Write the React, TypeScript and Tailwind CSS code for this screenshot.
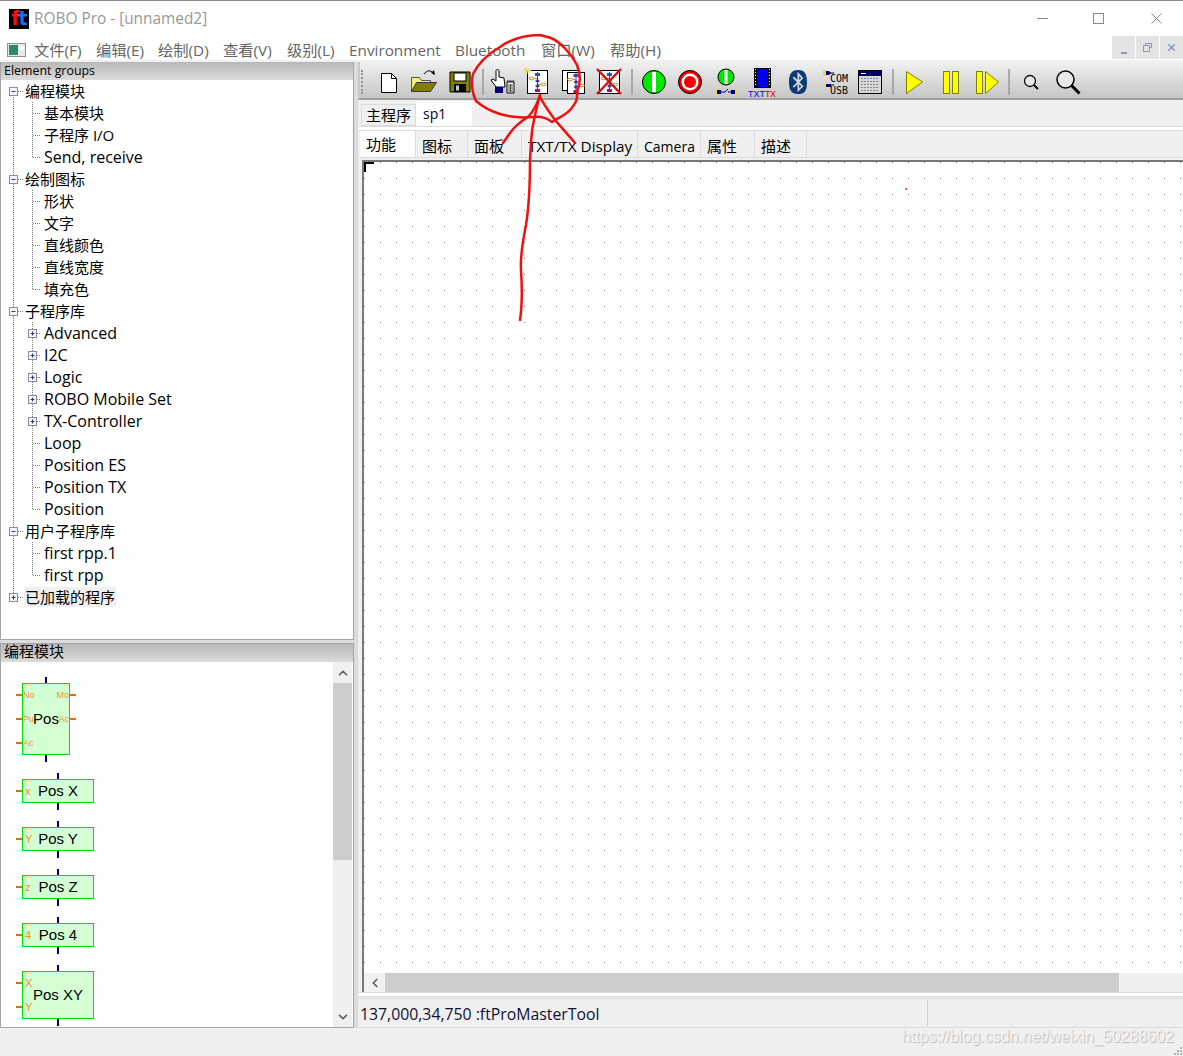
import { ChevronDown, ChevronLeft, ChevronUp, X } from "lucide-react";
import { FaBluetooth } from "react-icons/fa";

const UI_FONT = "font-['Open_Sans','Noto_Sans_CJK_SC',sans-serif]";
const BLOCK_FONT = "font-['Liberation_Sans','Noto_Sans_CJK_SC',sans-serif]";

type TreeRow = { text: string; level: 0 | 1; box?: "plus" | "minus"; lastChild?: boolean; lastRoot?: boolean; selected?: boolean };

const tree: TreeRow[] = [
    { text: "编程模块", level: 0, box: "minus" },
    { text: "基本模块", level: 1 },
    { text: "子程序 I/O", level: 1 },
    { text: "Send, receive", level: 1, lastChild: true },
    { text: "绘制图标", level: 0, box: "minus" },
    { text: "形状", level: 1 },
    { text: "文字", level: 1 },
    { text: "直线颜色", level: 1 },
    { text: "直线宽度", level: 1 },
    { text: "填充色", level: 1, lastChild: true },
    { text: "子程序库", level: 0, box: "minus" },
    { text: "Advanced", level: 1, box: "plus" },
    { text: "I2C", level: 1, box: "plus" },
    { text: "Logic", level: 1, box: "plus" },
    { text: "ROBO Mobile Set", level: 1, box: "plus" },
    { text: "TX-Controller", level: 1, box: "plus" },
    { text: "Loop", level: 1 },
    { text: "Position ES", level: 1 },
    { text: "Position TX", level: 1 },
    { text: "Position", level: 1, lastChild: true },
    { text: "用户子程序库", level: 0, box: "minus" },
    { text: "first rpp.1", level: 1 },
    { text: "first rpp", level: 1, lastChild: true },
    { text: "已加载的程序", level: 0, box: "plus", lastRoot: true, selected: true },
];

function TreeBox({ x, kind }: { x: number; kind: "plus" | "minus" }) {
    return (
        <g>
            <rect x={x - 4} y={7.5} width={8} height={8} fill="#f4f4f8" stroke="#8c8c9c" />
            <path d={`M${x - 2} 11.5h4`} stroke="#2a3a80" />
            {kind === "plus" && <path d={`M${x} 9.5v4`} stroke="#2a3a80" />}
        </g>
    );
}

function TreeItem({ row, index }: { row: TreeRow; index: number }) {
    const dots = { stroke: "#808080", strokeDasharray: "1 1", fill: "none" };
    const first = index === 0;
    const latin = /^[\x00-\x7f]+$/.test(row.text);
    return (
        <div className="flex h-[22px] items-center">
            <svg width={row.level === 0 ? 23 : 42} height={22} className="shrink-0">
                <path d={`M12.5 ${first ? 11 : 0}V${row.lastRoot ? 11 : 22}`} {...dots} />
                {row.level === 0 && <path d="M17 11.5h5" {...dots} />}
                {row.level === 1 && <path d={`M31.5 0V${row.lastChild ? 11 : 22}`} {...dots} />}
                {row.level === 1 && <path d="M32 11.5h8" {...dots} />}
                {row.box && <TreeBox x={row.level === 0 ? 12.5 : 31.5} kind={row.box} />}
            </svg>
            <span className={`px-[1px] leading-[20px] whitespace-nowrap text-black ${latin ? "text-[16px]" : "text-[15px]"} ${row.selected ? "bg-[#f0f0f0]" : ""}`}>{row.text}</span>
        </div>
    );
}

type Pin = { top: number; side: "left" | "right"; label: string };

function Block({ title, width, height, stubX, pins, size = 11 }: { title: string; width: number; height: number; stubX: number; pins: Pin[]; size?: number }) {
    return (
        <div className={`flex flex-col ${BLOCK_FONT}`} style={{ width }}>
            <div className="h-[6px] w-[2px] bg-[#000080]" style={{ marginLeft: stubX }} />
            <div className="relative flex items-center justify-center border border-[#00e000] bg-[#d4ffd4] text-[15px] text-black" style={{ height }}>
                {title}
                {pins.map((p) => (
                    <div key={p.side + p.top}>
                        <div className={`absolute h-[2px] w-[6px] bg-[#e07000] ${p.side === "left" ? "left-[-7px]" : "right-[-7px]"}`} style={{ top: p.top - 1 }} />
                        <span
                            className={`absolute leading-none text-[#ee9030] ${p.side === "left" ? (size > 9 ? "left-[2px]" : "left-0") : "right-0"}`}
                            style={{ top: p.top - Math.round(size / 2) + 1, fontSize: size }}
                        >
                            {p.label}
                        </span>
                    </div>
                ))}
            </div>
            <div className="h-[7px] w-[2px] bg-[#000080]" style={{ marginLeft: stubX }} />
        </div>
    );
}

function FlowGlyph({ x = 0, y = 0 }: { x?: number; y?: number }) {
    return (
        <g transform={`translate(${x} ${y})`}>
            <path d="M16 6v19" stroke="#3040a0" />
            <rect x={13.5} y={7} width={5} height={3} fill="#2850c8" />
            <path d="M13.5 15l2.5-2 2.5 2-2.5 2z" fill="#3040a0" />
            <path d="M13.5 20l2.5-2 2.5 2-2.5 2z" fill="#3040a0" />
            <rect x={13.5} y={23} width={5} height={3} fill="#c00070" />
            <ellipse cx={10} cy={12.5} rx={2.5} ry={1.3} fill="#fff" stroke="#e08020" />
            <path d="M12.5 12.5h3" stroke="#e08020" />
            <ellipse cx={22} cy={18.5} rx={2.5} ry={1.3} fill="#fff" stroke="#e08020" />
            <path d="M16.5 18.5h3" stroke="#e08020" />
        </g>
    );
}

function Tool({ className, children }: { className: string; children: React.ReactNode }) {
    return (
        <svg width={32} height={32} viewBox="0 0 32 32" className={`shrink-0 ${className}`}>
            {children}
        </svg>
    );
}

function Separator({ className }: { className: string }) {
    return <div className={`h-[26px] w-[2px] shrink-0 bg-[#a8a8a8] ${className}`} />;
}

function Toolbar() {
    return (
        <div className="flex h-[38px] shrink-0 items-center border-b-2 border-l-2 border-b-[#a0a0a0] border-l-[#c8c8c8] bg-gradient-to-b from-[#f0f0f0] to-[#c6c6c6] pt-[4px]">
            <div className="ml-[1px] h-[24px] w-[3px] shrink-0 border-l-2 border-dotted border-[#909090]" />
            {/* new, open, save */}
            <Tool className="ml-[9px]">
                <path d="M8.5 7.5h10l5 5v14h-15z" fill="#fff" stroke="#000" />
                <path d="M18.5 7.5v5h5" fill="none" stroke="#000" />
            </Tool>
            <Tool className="ml-[3px]">
                <path d="M3.5 11.5h8l2 3h9v11h-19z" fill="#f4f070" stroke="#555" />
                <path d="M3.5 25.5l5-9h20l-6 9z" fill="#808000" stroke="#333" />
                <path d="M16 8c3-4 7-4 9-1" fill="none" stroke="#000" />
                <path d="M27 9l-4-2 3-3z" fill="#000" />
            </Tool>
            <Tool className="ml-[4px]">
                <path d="M6 6h20v20H6z" fill="#808000" stroke="#000" />
                <rect x={10} y={7} width={12} height={8} fill="#fff" stroke="#000" />
                <rect x={10} y={18} width={12} height={8} fill="#000" />
                <rect x={12} y={19.5} width={3} height={5} fill="#c8c8c8" />
            </Tool>
            <Separator className="ml-[6px]" />
            <Tool className="ml-[3px]">
                <path d="M9 21L4 14l2-1 3 2V5c0-2 3-2 3 0v6l5 1 1 9z" fill="#fff" stroke="#000" />
                <rect x={8} y={21} width={8} height={6} fill="#000080" />
                <path d="M20 16h7v11h-7z" fill="#fff" stroke="#000" />
                <path d="M22 18v8M23.5 18v8M25 18v8M19.5 15h8" stroke="#000" strokeWidth={0.7} />
            </Tool>
            {/* sub program: new, copy, delete */}
            <Tool className="ml-[3px]">
                <rect x={5.5} y={4.5} width={20} height={23} fill="#fff" stroke="#000" />
                <FlowGlyph x={-0.5} y={0} />
                <path d="M5 1v7M1 4.5h8M2 2l6 5M8 2L2 7" stroke="#e8e040" />
            </Tool>
            <Tool className="ml-[2px]">
                <rect x={6.5} y={4.5} width={17} height={20} fill="#fff" stroke="#000" />
                <rect x={11.5} y={6.5} width={17} height={21} fill="#fff" stroke="#000" />
                <FlowGlyph x={4} y={1} />
            </Tool>
            <Tool className="ml-[5px]">
                <rect x={6.5} y={4.5} width={20} height={23} fill="#fff" stroke="#000" />
                <FlowGlyph x={0.5} y={0} />
                <path d="M4 3l24 25M28 3L4 28" stroke="#d81010" strokeWidth={2.5} />
            </Tool>
            <Separator className="ml-[6px]" />
            {/* run controls */}
            <Tool className="ml-[5px]">
                <circle cx={16} cy={16} r={11.5} fill="#00e800" stroke="#000" />
                <rect x={14} y={6} width={4} height={20} fill="#fff" />
            </Tool>
            <Tool className="ml-[4px]">
                <circle cx={16} cy={16} r={11.5} fill="#f00000" stroke="#000" />
                <circle cx={16} cy={16} r={8.5} fill="#fff" />
                <circle cx={16} cy={16} r={6} fill="#f00000" />
            </Tool>
            <Tool className="ml-[4px]">
                <circle cx={16} cy={11} r={8} fill="#00e800" stroke="#000" />
                <rect x={14.5} y={4} width={3} height={14} fill="#fff" />
                <rect x={5} y={23} width={2} height={6} fill="#e8e040" />
                <rect x={7} y={24} width={4} height={4} fill="#000080" />
                <path d="M11 26h4l3-3M18 26h4" stroke="#000080" fill="none" />
                <rect x={21} y={24} width={4} height={4} fill="#000080" />
                <rect x={25} y={23} width={2} height={6} fill="#e8e040" />
            </Tool>
            <Tool className="ml-[4px]">
                <rect x={8} y={2} width={17} height={20} fill="#000" />
                <path d="M9.5 3v18M23.5 3v18" stroke="#fff" strokeDasharray="1 2" />
                <rect x={11} y={3} width={11} height={18} fill="#0000f0" />
                <text x={2} y={30.5} fontFamily="Liberation Sans" fontSize={9} fill="#0000f0" textLength={17}>TXT</text>
                <text x={19} y={30.5} fontFamily="Liberation Sans" fontSize={9} fill="#e00000" textLength={11}>TX</text>
            </Tool>
            <div className="ml-[4px] flex w-[32px] shrink-0 justify-center">
                <FaBluetooth size={24} color="#0a3a78" />
            </div>
            <Tool className="ml-[4px]">
                <rect x={5} y={4} width={3} height={6} fill="#e8e040" />
                <path d="M8 5h3l2 2-2 2H8z" fill="#000080" />
                <path d="M12 7h4" stroke="#000" />
                <rect x={5} y={18} width={3} height={4} fill="#e8e040" />
                <path d="M8 18h5v3H8z" fill="#000080" />
                <path d="M13 19h3" stroke="#000" />
                <text x={12} y={16} fontFamily="DejaVu Sans Mono" fontSize={10} fill="#000" textLength={18}>COM</text>
                <text x={12} y={28} fontFamily="DejaVu Sans Mono" fontSize={10} fill="#000" textLength={18}>USB</text>
            </Tool>
            <Tool className="ml-[4px]">
                <rect x={4.5} y={4.5} width={23} height={23} fill="#d8d8d8" stroke="#000" />
                <rect x={5} y={5} width={22} height={5} fill="#000060" />
                <path d="M7 7.5h5" stroke="#fff" />
                <path d="M7 12.5h18M7 15.5h18M7 18.5h18M7 21.5h18M7 24.5h18" stroke="#888" strokeDasharray="2 1" />
            </Tool>
            <Separator className="ml-[6px]" />
            {/* transfer */}
            <Tool className="ml-[4px]">
                <path d="M8.5 5.5L24.5 16 8.5 27.5z" fill="#ffff00" stroke="#808000" />
            </Tool>
            <Tool className="ml-[5px]">
                <rect x={8.5} y={5.5} width={6} height={22} fill="#ffff00" stroke="#808000" />
                <rect x={17.5} y={5.5} width={6} height={22} fill="#ffff00" stroke="#808000" />
            </Tool>
            <Tool className="ml-[4px]">
                <rect x={5.5} y={5.5} width={6} height={22} fill="#ffff00" stroke="#808000" />
                <path d="M14.5 5.5L27.5 16 14.5 27.5z" fill="#ffff00" stroke="#808000" />
            </Tool>
            <Separator className="ml-[5px]" />
            {/* zoom */}
            <Tool className="ml-[5px]">
                <circle cx={15} cy={15} r={5.5} fill="#e8e8e8" stroke="#000" strokeWidth={1.3} />
                <path d="M19 19l4 4" stroke="#000" strokeWidth={2} />
            </Tool>
            <Tool className="ml-[5px]">
                <circle cx={13.5} cy={13.5} r={8.5} fill="#e8e8e8" stroke="#000" strokeWidth={1.5} />
                <path d="M19.5 19.5l8 8" stroke="#000" strokeWidth={3} />
            </Tool>
        </div>
    );
}

const canvasTabs = [
    { label: "功能", width: "w-[56px]", text: "text-[15px]" },
    { label: "图标", width: "w-[52px]", text: "text-[15px] pt-[4px]" },
    { label: "面板", width: "w-[54px]", text: "text-[15px] pt-[4px]" },
    { label: "TXT/TX Display", width: "w-[116px]", text: "text-[15.3px] pt-[4px]" },
    { label: "Camera", width: "w-[63px]", text: "text-[14px] pt-[4px]" },
    { label: "属性", width: "w-[54px]", text: "text-[15px] pt-[4px]" },
    { label: "描述", width: "w-[52px]", text: "text-[15px] pt-[4px]" },
];

function RedMarks() {
    return (
        <svg className="pointer-events-none absolute top-0 left-0" width={1183} height={1056} fill="none" stroke="#f01010" strokeWidth={2.5} strokeLinecap="round" strokeLinejoin="round">
            <path d="M540 35C525 35 510 40 500 47 488 54 478 64 473 74 471 82 472 92 476 101 483 107 490 111 500 114 510 117 522 118 533 117 540 116 546 117 552 122 558 118 566 115 571 109 575 104 578 100 577 92 580 85 581 75 577 65 571 53 560 42 551 38Z" />
            <path d="M540 95C537 105 534 110 529 116 520 122 514 127 510 133L503 143" />
            <path d="M540 97C544 105 550 113 555 120 562 128 570 137 575 143" />
            <path d="M540 95C537 105 535 115 533 125 531 135 531 145 530 160 530 180 530 200 526 225 523 240 520 255 521 270 522 285 523 300 520 320" />
            <circle cx={906} cy={189} r={0.5} strokeWidth={1} />
        </svg>
    );
}

export default function App() {
    return (
        <div className={`relative h-[1056px] w-[1183px] overflow-hidden bg-[#f0f0f0] ${UI_FONT}`}>
            {/* title bar */}
            <div className="flex h-[36px] items-center border-t border-[#8c8c8c] bg-white pl-[9px]">
                <div className="flex h-[20px] w-[20px] items-center justify-center bg-black font-['DejaVu_Sans',sans-serif] text-[19px] leading-none font-bold tracking-[-1px]">
                    <span className="text-[#f01010]">f</span>
                    <span className="text-[#1070f0]">t</span>
                </div>
                <span className="ml-[5px] text-[15.4px] text-[#999999]">ROBO Pro - [unnamed2]</span>
                <svg width={146} height={12} fill="none" stroke="#8a8a8a" className="mt-[1px] ml-auto shrink-0">
                    <path d="M0 5.5h11" />
                    <rect x={56.5} y={0.5} width={10} height={10} />
                    <path d="M114.5 0.5l10 10M124.5 0.5l-10 10" />
                </svg>
            </div>

            {/* menu */}
            <div className="flex h-[24px] items-center bg-white pl-[7px] text-[15.3px] whitespace-nowrap text-[#666666]">
                <svg width={19} height={14} className="mr-[8px] mt-[3px] shrink-0">
                    <rect x={0.5} y={0.5} width={18} height={13} fill="#e8e8e8" stroke="#909090" />
                    <rect x={2} y={2} width={9} height={10} fill="#2a8a70" />
                    <rect x={12} y={3} width={5} height={4} fill="#ffffff" />
                </svg>
                <span className="w-[62px] pt-[4px]">文件(F)</span>
                <span className="w-[62px] pt-[4px]">编辑(E)</span>
                <span className="w-[65px] pt-[4px]">绘制(D)</span>
                <span className="w-[64px] pt-[4px]">查看(V)</span>
                <span className="w-[62px] pt-[4px]">级别(L)</span>
                <span className="w-[106px] pt-[4px]">Environment</span>
                <span className="w-[86px] pt-[4px]">Bluetooth</span>
                <span className="w-[69px] pt-[4px]">窗口(W)</span>
                <span className="pt-[4px]">帮助(H)</span>
                <div className="ml-auto flex h-[23px] gap-[1px] self-start pt-0 text-[#8a9ab0]">
                    <div className="flex w-[23px] items-end justify-center bg-[#e4e4e4] pb-[5px]">
                        <div className="h-[2px] w-[6px] bg-[#8a9ab0]" />
                    </div>
                    <div className="flex w-[23px] items-center justify-center bg-[#e4e4e4]">
                        <svg width={9} height={9} fill="none" stroke="#8a9ab0">
                            <path d="M2.5 2.5v-2h6v4h-2M.5 2.5h6v6h-6z" />
                        </svg>
                    </div>
                    <div className="flex w-[23px] items-center justify-center bg-[#e4e4e4]">
                        <X size={11} strokeWidth={3.5} />
                    </div>
                </div>
            </div>
            <div className="h-[2px]" />

            <div className="flex h-[966px] bg-[#dcdcdc]">
                {/* left column */}
                <div className="flex w-[354px] shrink-0 flex-col gap-[3px]">
                    <div className="flex h-[578px] flex-col border-x border-b border-[#a4a4a4] bg-white">
                        <div className="flex h-[18px] shrink-0 items-center bg-gradient-to-b from-[#b8b8b8] to-[#dcdcdc] pl-[3px] text-[12.4px] text-black">Element groups</div>
                        <div className="flex flex-col">
                            {tree.map((row, i) => (
                                <TreeItem key={row.text} row={row} index={i} />
                            ))}
                        </div>
                    </div>
                    <div className="flex h-[385px] flex-col border border-[#a4a4a4] bg-white">
                        <div className="flex h-[18px] shrink-0 items-center bg-gradient-to-b from-[#b8b8b8] to-[#dcdcdc] pb-[3px] pl-[3px] text-[15px] leading-none text-black">编程模块</div>
                        <div className="flex min-h-0 flex-1">
                            <div className="flex min-w-0 flex-1 flex-col gap-[11px] overflow-hidden pt-[15px] pl-[21px]">
                                <Block
                                    title="Pos"
                                    width={48}
                                    height={72}
                                    stubX={23}
                                    size={9}
                                    pins={[
                                        { top: 11, side: "left", label: "No" },
                                        { top: 11, side: "right", label: "Mo" },
                                        { top: 35, side: "left", label: "Pu" },
                                        { top: 35, side: "right", label: "Ac" },
                                        { top: 59, side: "left", label: "Ac" },
                                    ]}
                                />
                                <Block title="Pos X" width={72} height={24} stubX={35} pins={[{ top: 11, side: "left", label: "x" }]} />
                                <Block title="Pos Y" width={72} height={24} stubX={35} pins={[{ top: 11, side: "left", label: "Y" }]} />
                                <Block title="Pos Z" width={72} height={24} stubX={35} pins={[{ top: 11, side: "left", label: "z" }]} />
                                <Block title="Pos 4" width={72} height={24} stubX={35} pins={[{ top: 11, side: "left", label: "4" }]} />
                                <Block
                                    title="Pos XY"
                                    width={72}
                                    height={48}
                                    stubX={35}
                                    pins={[
                                        { top: 11, side: "left", label: "X" },
                                        { top: 35, side: "left", label: "Y" },
                                    ]}
                                />
                            </div>
                            <div className="mr-[1px] flex w-[19px] shrink-0 flex-col bg-[#f0f0f0]">
                                <div className="flex h-[21px] shrink-0 items-center justify-center text-[#606060]">
                                    <ChevronUp size={14} strokeWidth={3} />
                                </div>
                                <div className="h-[177px] shrink-0 bg-[#cdcdcd]" />
                                <div className="mt-auto flex h-[21px] shrink-0 items-center justify-center text-[#606060]">
                                    <ChevronDown size={14} strokeWidth={3} />
                                </div>
                            </div>
                        </div>
                    </div>
                </div>

                {/* right column */}
                <div className="ml-[4px] flex min-w-0 flex-1 flex-col bg-[#f0f0f0]">
                    <Toolbar />
                    <div className="flex h-[27px] shrink-0 items-end border-b border-[#dcdcdc] pl-[3px]">
                        <div className="flex h-[22px] w-[55px] items-center justify-center border border-[#dcdcdc] text-[15px] text-black">主程序</div>
                        <div className="flex h-[25px] w-[56px] items-center bg-white pl-[7px] text-[14px] text-[#000040]">sp1</div>
                    </div>
                    <div className="h-[4px] shrink-0 border-b border-[#dcdcdc] bg-white" />
                    <div className="flex h-[27px] shrink-0 items-stretch border-b border-[#dcdcdc] pl-[2px] text-black">
                        {canvasTabs.map((t, i) => (
                            <div
                                key={t.label}
                                className={`flex items-center border-r border-[#dcdcdc] pl-[6px] whitespace-nowrap ${t.width} ${t.text} ${i === 0 ? "bg-white" : ""}`}
                            >
                                {t.label}
                            </div>
                        ))}
                    </div>
                    <div className="h-[2px] shrink-0" />
                    <div className="ml-[4px] flex min-h-0 flex-1 flex-col border-t-2 border-l-2 border-[#787878] bg-white">
                        <div className="relative min-h-0 flex-1 bg-[linear-gradient(to_right,#fff_15px,transparent_15px),linear-gradient(to_bottom,#fff_15px,#777_15px)] bg-[length:16px_16px] bg-[position:1px_1px]">
                            <div className="absolute top-0 left-0 h-[10px] w-[10px] border-t-2 border-l-2 border-black" />
                        </div>
                        <div className="flex h-[19px] shrink-0 bg-[#f0f0f0] text-[#606060]">
                            <div className="flex w-[21px] items-center justify-center">
                                <ChevronLeft size={14} strokeWidth={3} />
                            </div>
                            <div className="w-[734px] bg-[#cdcdcd]" />
                        </div>
                    </div>
                    <div className="h-[5px] shrink-0 border-y border-[#dcdcdc] bg-white" />
                    <div className="h-[2px] shrink-0 border-b border-[#dcdcdc]" />
                    <div className="flex h-[29px] shrink-0 items-stretch border-b border-[#dcdcdc] pl-[2px] text-[15.8px] text-[#101030]">
                        <div className="flex w-[567px] items-center pt-[3px] whitespace-nowrap">137,000,34,750 :ftProMasterTool</div>
                        <div className="my-[1px] w-[1px] bg-[#d0d0d0]" />
                    </div>
                </div>
            </div>

            {/* footer */}
            <div className="flex h-[28px] items-center justify-end pr-[9px] pb-[10px]">
                <span className={`text-[16px] text-[#f2f2f2] [text-shadow:1px_1px_1px_#b8b8b8] ${BLOCK_FONT}`}>https://blog.csdn.net/weixin_50288602</span>
            </div>
            <svg className="absolute right-0 bottom-0" width={9} height={9} fill="#b4b4b4">
                <rect x={6} y={0} width={2} height={2} />
                <rect x={3} y={3} width={2} height={2} />
                <rect x={6} y={3} width={2} height={2} />
                <rect x={0} y={6} width={2} height={2} />
                <rect x={3} y={6} width={2} height={2} />
                <rect x={6} y={6} width={2} height={2} />
            </svg>

            <RedMarks />
        </div>
    );
}
